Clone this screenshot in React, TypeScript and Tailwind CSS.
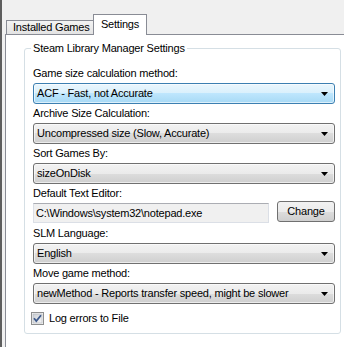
import * as React from "react";

// Win7-style WinForms settings tab: tab strip, group box, combo boxes.

const grayFace =
  "bg-[linear-gradient(to_bottom,#f2f2f2_0%,#ebebeb_50%,#dddddd_50%,#cfcfcf_100%)] border-[#707070]";
const hotFace =
  "bg-[linear-gradient(to_bottom,#eaf6fd_0%,#d9f0fc_50%,#bee6fd_50%,#a7d9f5_100%)] border-[#3c7fb1]";

function Arrow() {
  return (
    <svg width="7" height="4" viewBox="0 0 7 4" aria-hidden="true">
      <polygon points="0,0 7,0 3.5,4" fill="#000" />
    </svg>
  );
}

function Combo({ value, hot = false }: { value: string; hot?: boolean }) {
  return (
    <div
      className={`flex h-[21px] items-center justify-between rounded-[3px] border pl-[3px] pr-[6px] shadow-[inset_0_0_0_1px_rgba(255,255,255,0.6)] ${
        hot ? hotFace : grayFace
      }`}
    >
      <span className="leading-[13px]">{value}</span>
      <Arrow />
    </div>
  );
}

function Field({ label, children }: { label: string; children: React.ReactNode }) {
  return (
    <div className="flex flex-col gap-[3px]">
      <div className="h-[14px] leading-[14px]">{label}</div>
      {children}
    </div>
  );
}

function CheckBox() {
  return (
    <svg width="13" height="13" viewBox="0 0 13 13" aria-hidden="true">
      <defs>
        <linearGradient id="cbfill" x1="0" y1="0" x2="1" y2="1">
          <stop offset="0" stopColor="#cbcfd5" />
          <stop offset="1" stopColor="#f6f6f6" />
        </linearGradient>
      </defs>
      <rect x="0.5" y="0.5" width="12" height="12" fill="#f4f4f4" stroke="#8e8f8f" />
      <rect x="2" y="2" width="9" height="9" fill="url(#cbfill)" stroke="#aeb3b9" strokeWidth="0.6" />
      <path d="M3 6.2 L5.3 9 L10 3.2" fill="none" stroke="#3e5a8c" strokeWidth="1.8" />
    </svg>
  );
}

export default function App() {
  return (
    <div className="h-[347px] w-[344px] overflow-hidden border-l-2 border-[#5e5e5e] bg-[#f0f0f0] font-['Liberation_Sans',Arial,sans-serif] text-[11px] tracking-[-0.2px] text-black">
      <div className="pl-[3px] pt-[14px]">
        {/* tabs */}
        <div className="relative z-10 flex h-[20px] items-end pl-[1px]">
          <div className="flex h-[14px] w-[87px] items-center border border-b-0 border-r-0 border-[#898c95] bg-[linear-gradient(to_bottom,#f3f3f3,#e3e3e3)] pl-[6px] leading-[13px]">
            Installed Games
          </div>
          <div className="-mb-px flex h-[21px] w-[54px] items-start justify-center border border-b-0 border-[#898c95] bg-white pt-[3px] leading-[13px]">
            Settings
          </div>
        </div>

        {/* tab page */}
        <div className="h-[400px] w-[400px] border border-[#898c95] bg-white pl-[18px] pt-[7px]">
          <fieldset className="w-[317px] rounded-[3px] border border-[#d5dfe5]">
            <legend className="ml-[6px] px-[2px] leading-[13px]">Steam Library Manager Settings</legend>
            <div className="flex flex-col gap-[2px] pb-[8px] pl-[8px] pr-[5px] pt-[11px]">
              <Field label="Game size calculation method:">
                <Combo value="ACF - Fast, not Accurate" hot />
              </Field>
              <Field label="Archive Size Calculation:">
                <Combo value="Uncompressed size (Slow, Accurate)" />
              </Field>
              <Field label="Sort Games By:">
                <Combo value="sizeOnDisk" />
              </Field>
              <Field label="Default Text Editor:">
                <div className="flex h-[21px] items-start justify-between">
                  <div className="flex h-[20px] w-[236px] items-center border border-[#dbdfe6] border-t-[#abadb3] bg-[#f0f0f0] pl-[2px]">
                    C:\Windows\system32\notepad.exe
                  </div>
                  <button
                    type="button"
                    className={`-mt-[2px] flex h-[21px] w-[58px] items-center justify-center rounded-[3px] border ${grayFace}`}
                  >
                    Change
                  </button>
                </div>
              </Field>
              <Field label="SLM Language:">
                <Combo value="English" />
              </Field>
              <Field label="Move game method:">
                <Combo value="newMethod - Reports transfer speed, might be slower" />
              </Field>
              <label className="-ml-[2px] mt-[6px] flex h-[13px] items-center gap-[5px]">
                <CheckBox />
                <span className="leading-[13px]">Log errors to File</span>
              </label>
            </div>
          </fieldset>
        </div>
      </div>
    </div>
  );
}
